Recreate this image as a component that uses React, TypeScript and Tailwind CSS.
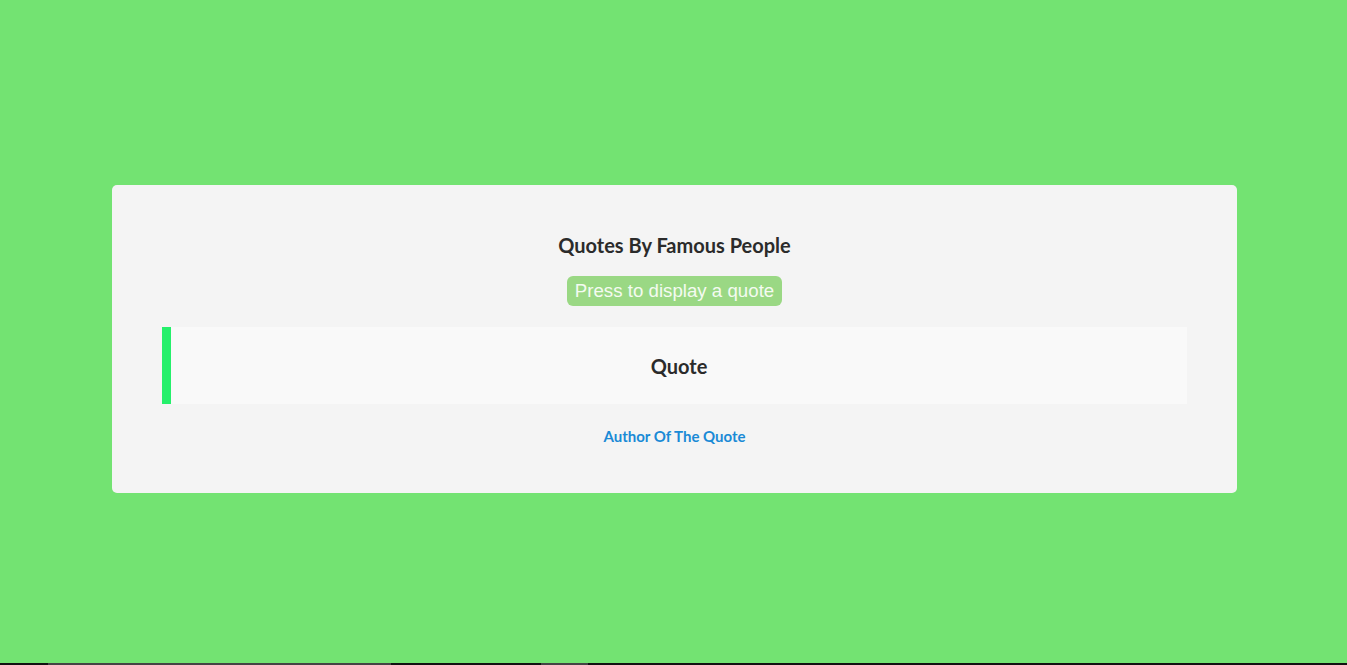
import React from 'react';

export default function App() {
    return (
        <div className="min-h-[665px] bg-[#73e372] flex flex-col">
            <div className="flex-1 pt-[185px]">
                <div className="w-[1125px] ml-[112px] bg-[#f4f4f4] rounded-[5px] px-[50px] pt-[48px] pb-[48px] flex flex-col items-center">
                    {/* Заголовок */}
                    <h1 className="text-[20px] leading-[24px] font-bold text-[#2b2b2b] font-['Lato',sans-serif]">
                        Quotes By Famous People
                    </h1>

                    <button className="mt-[19px] h-[30px] px-[8px] rounded-[6px] bg-[#9ad884] text-[#f4fbf1] text-[18.7px] leading-[30px] font-['Liberation_Sans',Arial,sans-serif]">
                        Press to display a quote
                    </button>

                    {/* Цитата */}
                    <div className="mt-[21px] w-full h-[77px] bg-[#f9f9f9] border-l-[9px] border-[#25f06b] flex items-center justify-center">
                        <p className="text-[20px] font-bold text-[#2b2b2b] font-['Lato',sans-serif]">Quote</p>
                    </div>

                    <p className="mt-[23px] text-[15px] leading-[18px] font-bold text-[#1a8ad6] font-['Lato',sans-serif]">
                        Author Of The Quote
                    </p>
                </div>
            </div>
            <div className="h-[2px] flex">
                <div className="w-[48px] bg-[#111]" />
                <div className="w-[343px] bg-[#444]" />
                <div className="w-[150px] bg-[#111]" />
                <div className="w-[47px] bg-[#444]" />
                <div className="flex-1 bg-[#111]" />
            </div>
        </div>
    );
}
